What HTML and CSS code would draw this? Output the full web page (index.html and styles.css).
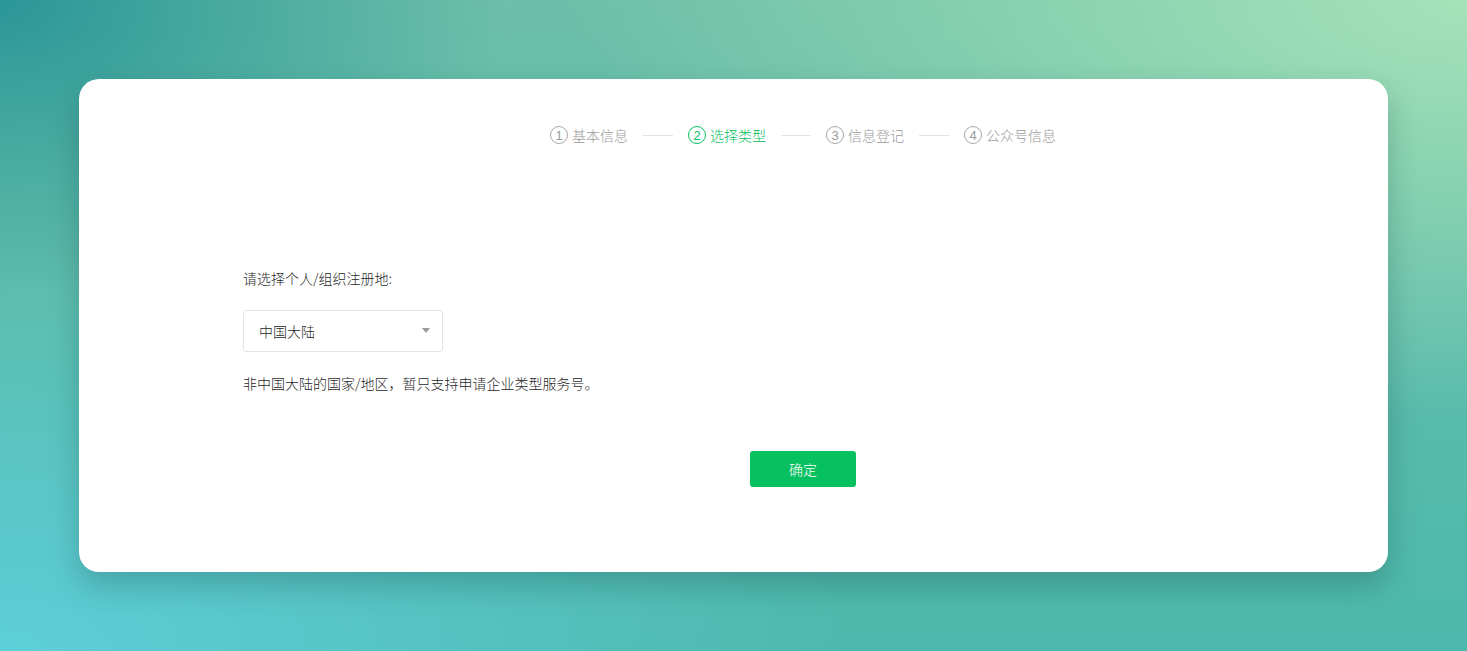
FILE: index.html
```html
<!DOCTYPE html>
<html lang="zh-CN">
<head>
<meta charset="utf-8">
<title>选择类型</title>
<link rel="stylesheet" href="styles.css">
</head>
<body>
<div class="page">
  <div class="card">
    <div class="inner">
      <div class="steps">
        <div class="step"><span class="num">1</span><span class="label">基本信息</span></div>
        <div class="sep"></div>
        <div class="step active"><span class="num">2</span><span class="label">选择类型</span></div>
        <div class="sep"></div>
        <div class="step"><span class="num">3</span><span class="label">信息登记</span></div>
        <div class="sep"></div>
        <div class="step"><span class="num">4</span><span class="label">公众号信息</span></div>
      </div>
      <div class="form">
        <div class="form-label">请选择个人/组织注册地:</div>
        <div class="select">
          <span class="select-value">中国大陆</span>
          <span class="caret"></span>
        </div>
        <div class="tip">非中国大陆的国家/地区，暂只支持申请企业类型服务号。</div>
      </div>
      <div class="actions">
        <button class="btn-primary" type="button">确定</button>
      </div>
    </div>
  </div>
</div>
</body>
</html>
```
FILE: styles.css
```css
html, body {
  margin: 0;
  padding: 0;
  height: 100%;
}
body {
  font-family: "Noto Sans CJK SC", "Noto Sans", "Liberation Sans", sans-serif;
  font-weight: 300;
  color: #262626;
  font-size: 14px;
  overflow: hidden;
}
.page {
  width: 1467px;
  height: 651px;
  box-sizing: border-box;
  padding: 79px 0 0 79px;
  background:
    radial-gradient(ellipse 900px 420px at 100% 0%, rgba(168, 228, 185, 0.95) 0%, rgba(168, 228, 185, 0) 100%),
    radial-gradient(ellipse 850px 400px at 0% 100%, rgba(94, 208, 218, 0.95) 0%, rgba(94, 208, 218, 0) 100%),
    radial-gradient(ellipse 500px 300px at 0% 0%, rgba(36, 146, 150, 0.9) 0%, rgba(36, 146, 150, 0) 100%),
    linear-gradient(180deg, #6cbfa8 0%, #4db8ad 100%);
}
.card {
  width: 1309px;
  height: 493px;
  box-sizing: border-box;
  background: #fff;
  border-radius: 20px;
  box-shadow: 0 14px 30px rgba(20, 70, 70, 0.28);
  padding: 46px 25px 0 164px;
}
.inner {
  width: 1120px;
}
.steps {
  display: flex;
  align-items: center;
  justify-content: center;
  height: 20px;
  color: #9a9a9a;
  font-size: 14px;
  line-height: 20px;
}
.step {
  display: flex;
  align-items: center;
}
.num {
  width: 16px;
  height: 16px;
  border: 1px solid #a8a8a8;
  border-radius: 50%;
  display: flex;
  align-items: center;
  justify-content: center;
  font-size: 13px;
  line-height: 1;
  font-family: "Liberation Sans", "Noto Sans", sans-serif;
  font-weight: 400;
  margin-right: 4px;
}
.step.active {
  color: #07c160;
}
.step.active .num {
  border-color: #07c160;
}
.sep {
  width: 30px;
  height: 1px;
  background: #e3e3e3;
  margin: 0 15px;
}
.form {
  margin-top: 123px;
}
.form-label {
  line-height: 20px;
}
.select {
  margin-top: 22px;
  width: 200px;
  height: 42px;
  box-sizing: border-box;
  border: 1px solid #e4e4e4;
  border-radius: 3px;
  display: flex;
  align-items: center;
  justify-content: space-between;
  padding: 0 12px 0 15px;
}
.select-value {
  line-height: 20px;
}
.caret {
  width: 0;
  height: 0;
  border-left: 4px solid transparent;
  border-right: 4px solid transparent;
  border-top: 5px solid #9a9a9a;
  margin-top: -2px;
}
.tip {
  margin-top: 21px;
  line-height: 20px;
}
.actions {
  display: flex;
  justify-content: center;
  margin-top: 58px;
}
.btn-primary {
  width: 106px;
  height: 36px;
  border: none;
  border-radius: 3px;
  background: #07c160;
  color: #fff;
  font-family: "Noto Sans CJK SC", "Noto Sans", sans-serif;
  font-weight: 300;
  font-size: 14px;
  padding: 0;
  cursor: pointer;
}
```
